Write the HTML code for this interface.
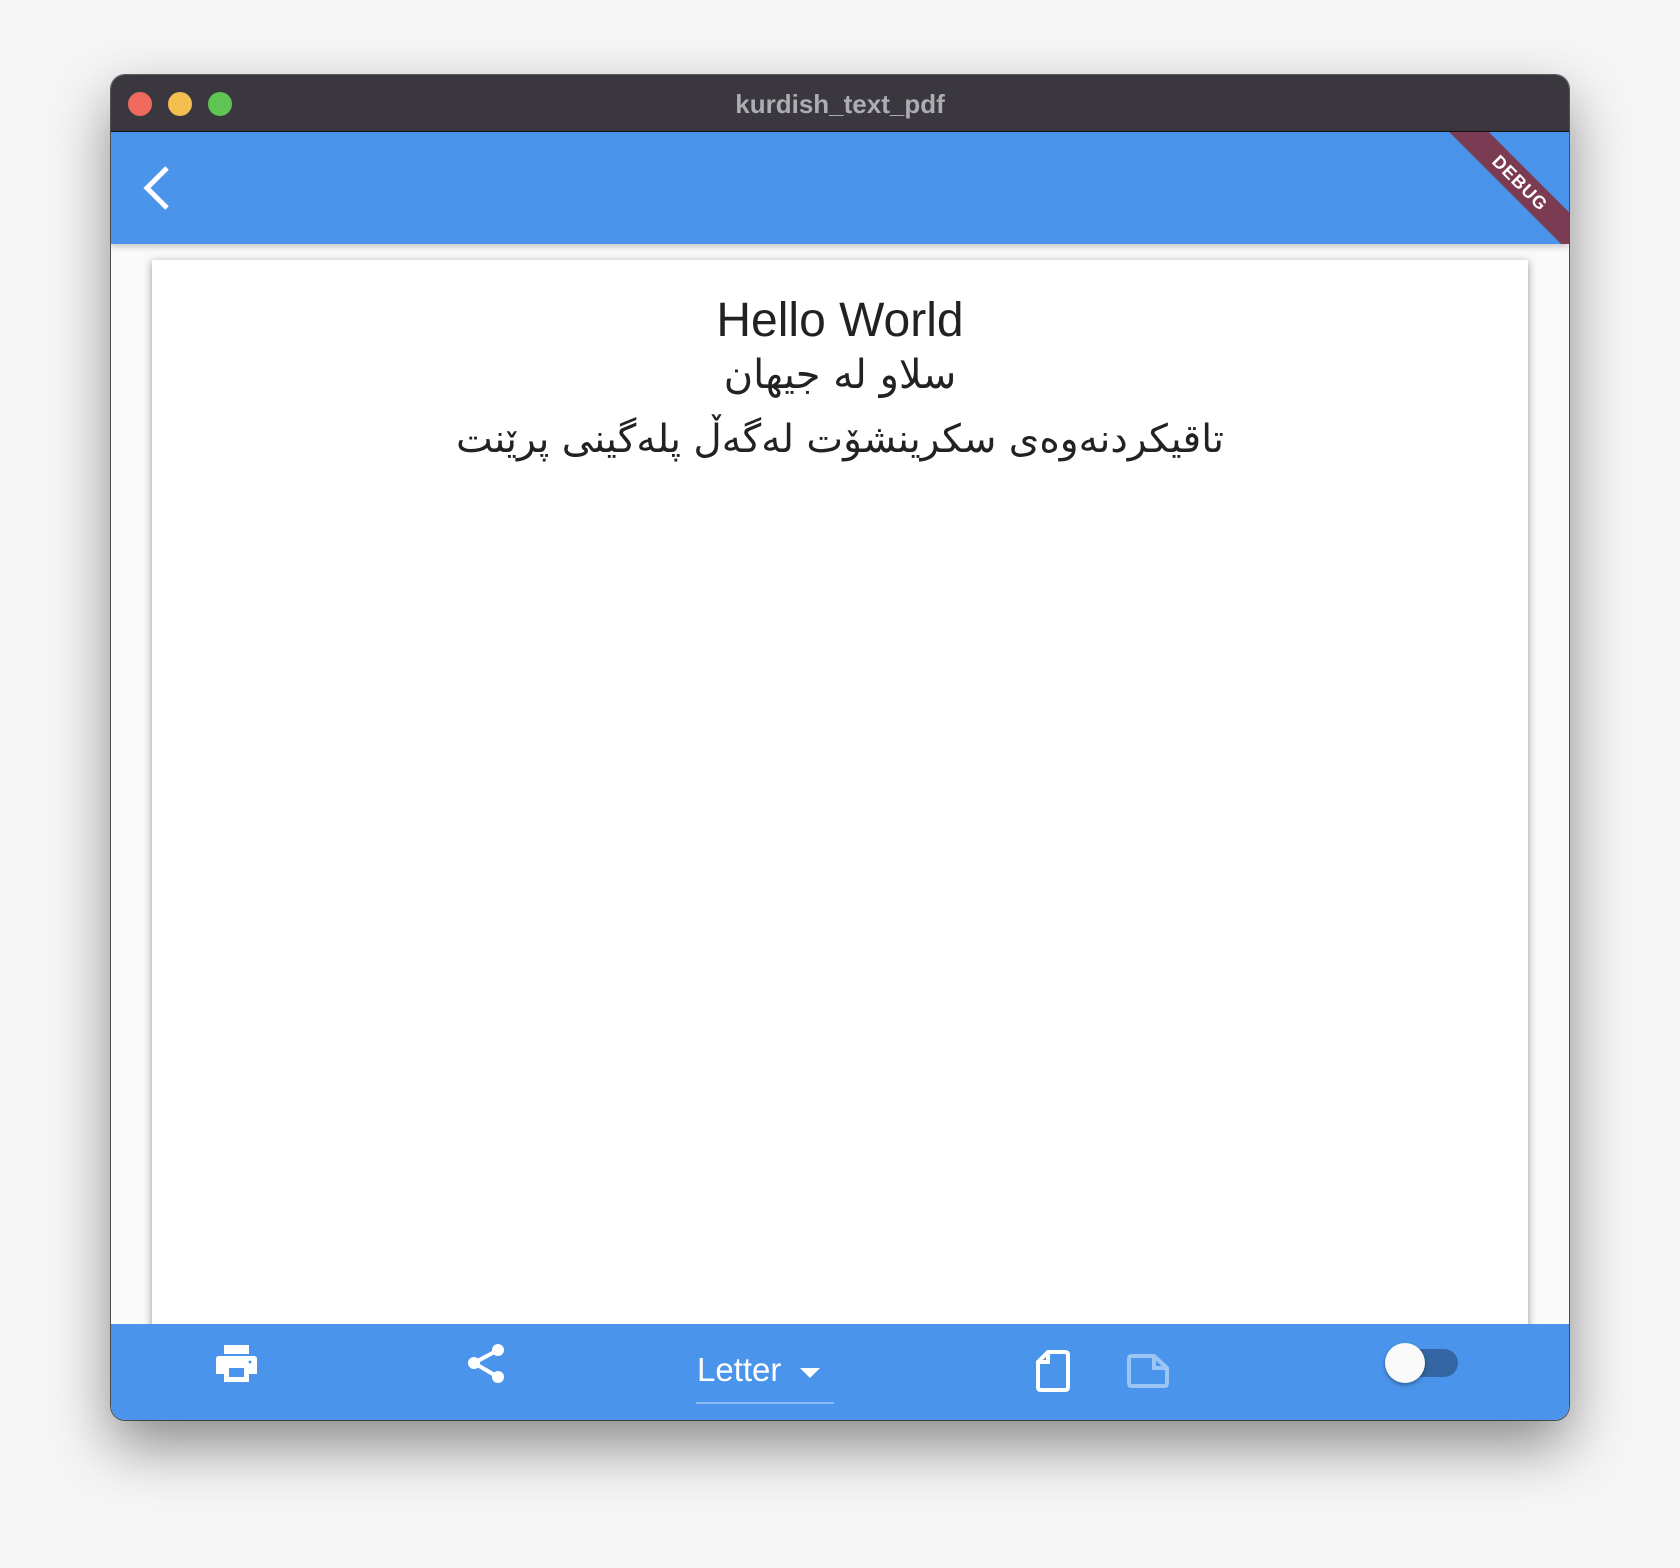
<!DOCTYPE html>
<html><head><meta charset="utf-8"><style>
*{margin:0;padding:0;box-sizing:border-box}
body{width:1680px;height:1568px;background:#f6f6f6;position:relative;overflow:hidden;font-family:"Liberation Sans",sans-serif}
.win{position:absolute;left:111px;top:75px;width:1458px;height:1345px;border-radius:14px;overflow:hidden;background:#fafafa;box-shadow:0 25px 60px rgba(0,0,0,.45),0 0 0 1px rgba(0,0,0,.6)}
.title{position:absolute;left:0;top:0;width:100%;height:57px;background:#3a373f;border-bottom:1px solid #111}
.title .t{position:absolute;left:0;right:0;top:14px;text-align:center;color:#aeacb2;font-weight:bold;font-size:26px}
.dot{position:absolute;top:17px;width:24px;height:24px;border-radius:50%}
.appbar{position:absolute;left:0;top:57px;width:100%;height:112px;background:#4a95eb;box-shadow:0 3px 6px rgba(0,0,0,.2);overflow:hidden}
.page{position:absolute;left:41px;top:185px;width:1376px;height:1080px;background:#fff;box-shadow:0 2px 8px rgba(0,0,0,.4)}
.bar{position:absolute;left:0;top:1249px;width:100%;height:96px;background:#4a95eb}
.txt{position:absolute;left:0;width:100%;text-align:center;color:#222}
</style></head><body>
<div class="win">
<div class="page">
 <div class="txt" style="top:33px;font-size:48px">Hello World</div>
 <div class="txt" style="top:92px;font-size:40px;font-family:'DejaVu Sans',sans-serif" dir="rtl">سلاو لە جیهان</div>
 <div class="txt" style="top:157px;font-size:39px;font-family:'DejaVu Sans',sans-serif" dir="rtl">تاقیکردنەوەی سکرینشۆت لەگەڵ پلەگینی پرێنت</div>
</div>
<div class="title">
 <div class="dot" style="left:17px;background:#ee6a5e"></div>
 <div class="dot" style="left:57px;background:#f5bf4f"></div>
 <div class="dot" style="left:97px;background:#61c554"></div>
 <div class="t">kurdish_text_pdf</div>
</div>
<div class="appbar">
 <svg style="position:absolute;left:26px;top:32px" width="40" height="48" viewBox="0 0 40 48"><path d="M30 4 L10 24 L30 44" stroke="#fff" stroke-width="5" fill="none"/></svg>
 <div style="position:absolute;left:1319px;top:37px;width:180px;height:28px;background:#7b3b52;transform:rotate(45deg);transform-origin:center;color:#fff;font-weight:bold;font-size:18px;text-align:center;line-height:28px;letter-spacing:1px">DEBUG</div>
</div>
<div class="bar">
 <svg style="position:absolute;left:105px;top:21px" width="41" height="37" viewBox="0 0 41 37"><rect x="8" y="0" width="25" height="9" fill="#fff"/><path d="M3 11 H38 Q41 11 41 14 V29 H33 V37 H8 V29 H0 V14 Q0 11 3 11Z M13 23 V32 H28 V23Z" fill="#fff" fill-rule="evenodd"/><circle cx="34" cy="17" r="1.5" fill="#4a95eb"/></svg>
 <svg style="position:absolute;left:356px;top:19px" width="38" height="41" viewBox="0 0 38 41"><path d="M31 7 L7 20 L31 34" stroke="#fff" stroke-width="4" fill="none"/><circle cx="31" cy="7" r="6" fill="#fff"/><circle cx="7" cy="20" r="6" fill="#fff"/><circle cx="31" cy="34" r="6" fill="#fff"/></svg>
 <div style="position:absolute;left:586px;top:27px;color:#fff;font-size:33px">Letter</div>
 <svg style="position:absolute;left:689px;top:44px" width="20" height="10"><path d="M0 0 H20 L10 10Z" fill="#fff"/></svg>
 <div style="position:absolute;left:585px;top:78px;width:138px;height:2px;background:rgba(255,255,255,.35)"></div>
 <svg style="position:absolute;left:925px;top:26px" width="34" height="42" viewBox="0 0 34 42"><path d="M12 2 H29 Q32 2 32 5 V37 Q32 40 29 40 H5 Q2 40 2 37 V12Z M12 2 V12 H2" stroke="#fff" stroke-width="4" fill="none"/></svg>
 <svg style="position:absolute;left:1016px;top:30px;opacity:.45" width="42" height="34" viewBox="0 0 42 34"><path d="M5 2 H27 L40 14 V29 Q40 32 37 32 H5 Q2 32 2 29 V5 Q2 2 5 2Z M27 2 V14 H40" stroke="#fff" stroke-width="4" fill="none"/></svg>
 <div style="position:absolute;left:1294px;top:25px;width:53px;height:28px;border-radius:14px;background:#3366a3"></div>
 <div style="position:absolute;left:1274px;top:19px;width:40px;height:40px;border-radius:50%;background:#fafafa;box-shadow:0 2px 4px rgba(0,0,0,.35)"></div>
</div>
</div>
</body></html>
